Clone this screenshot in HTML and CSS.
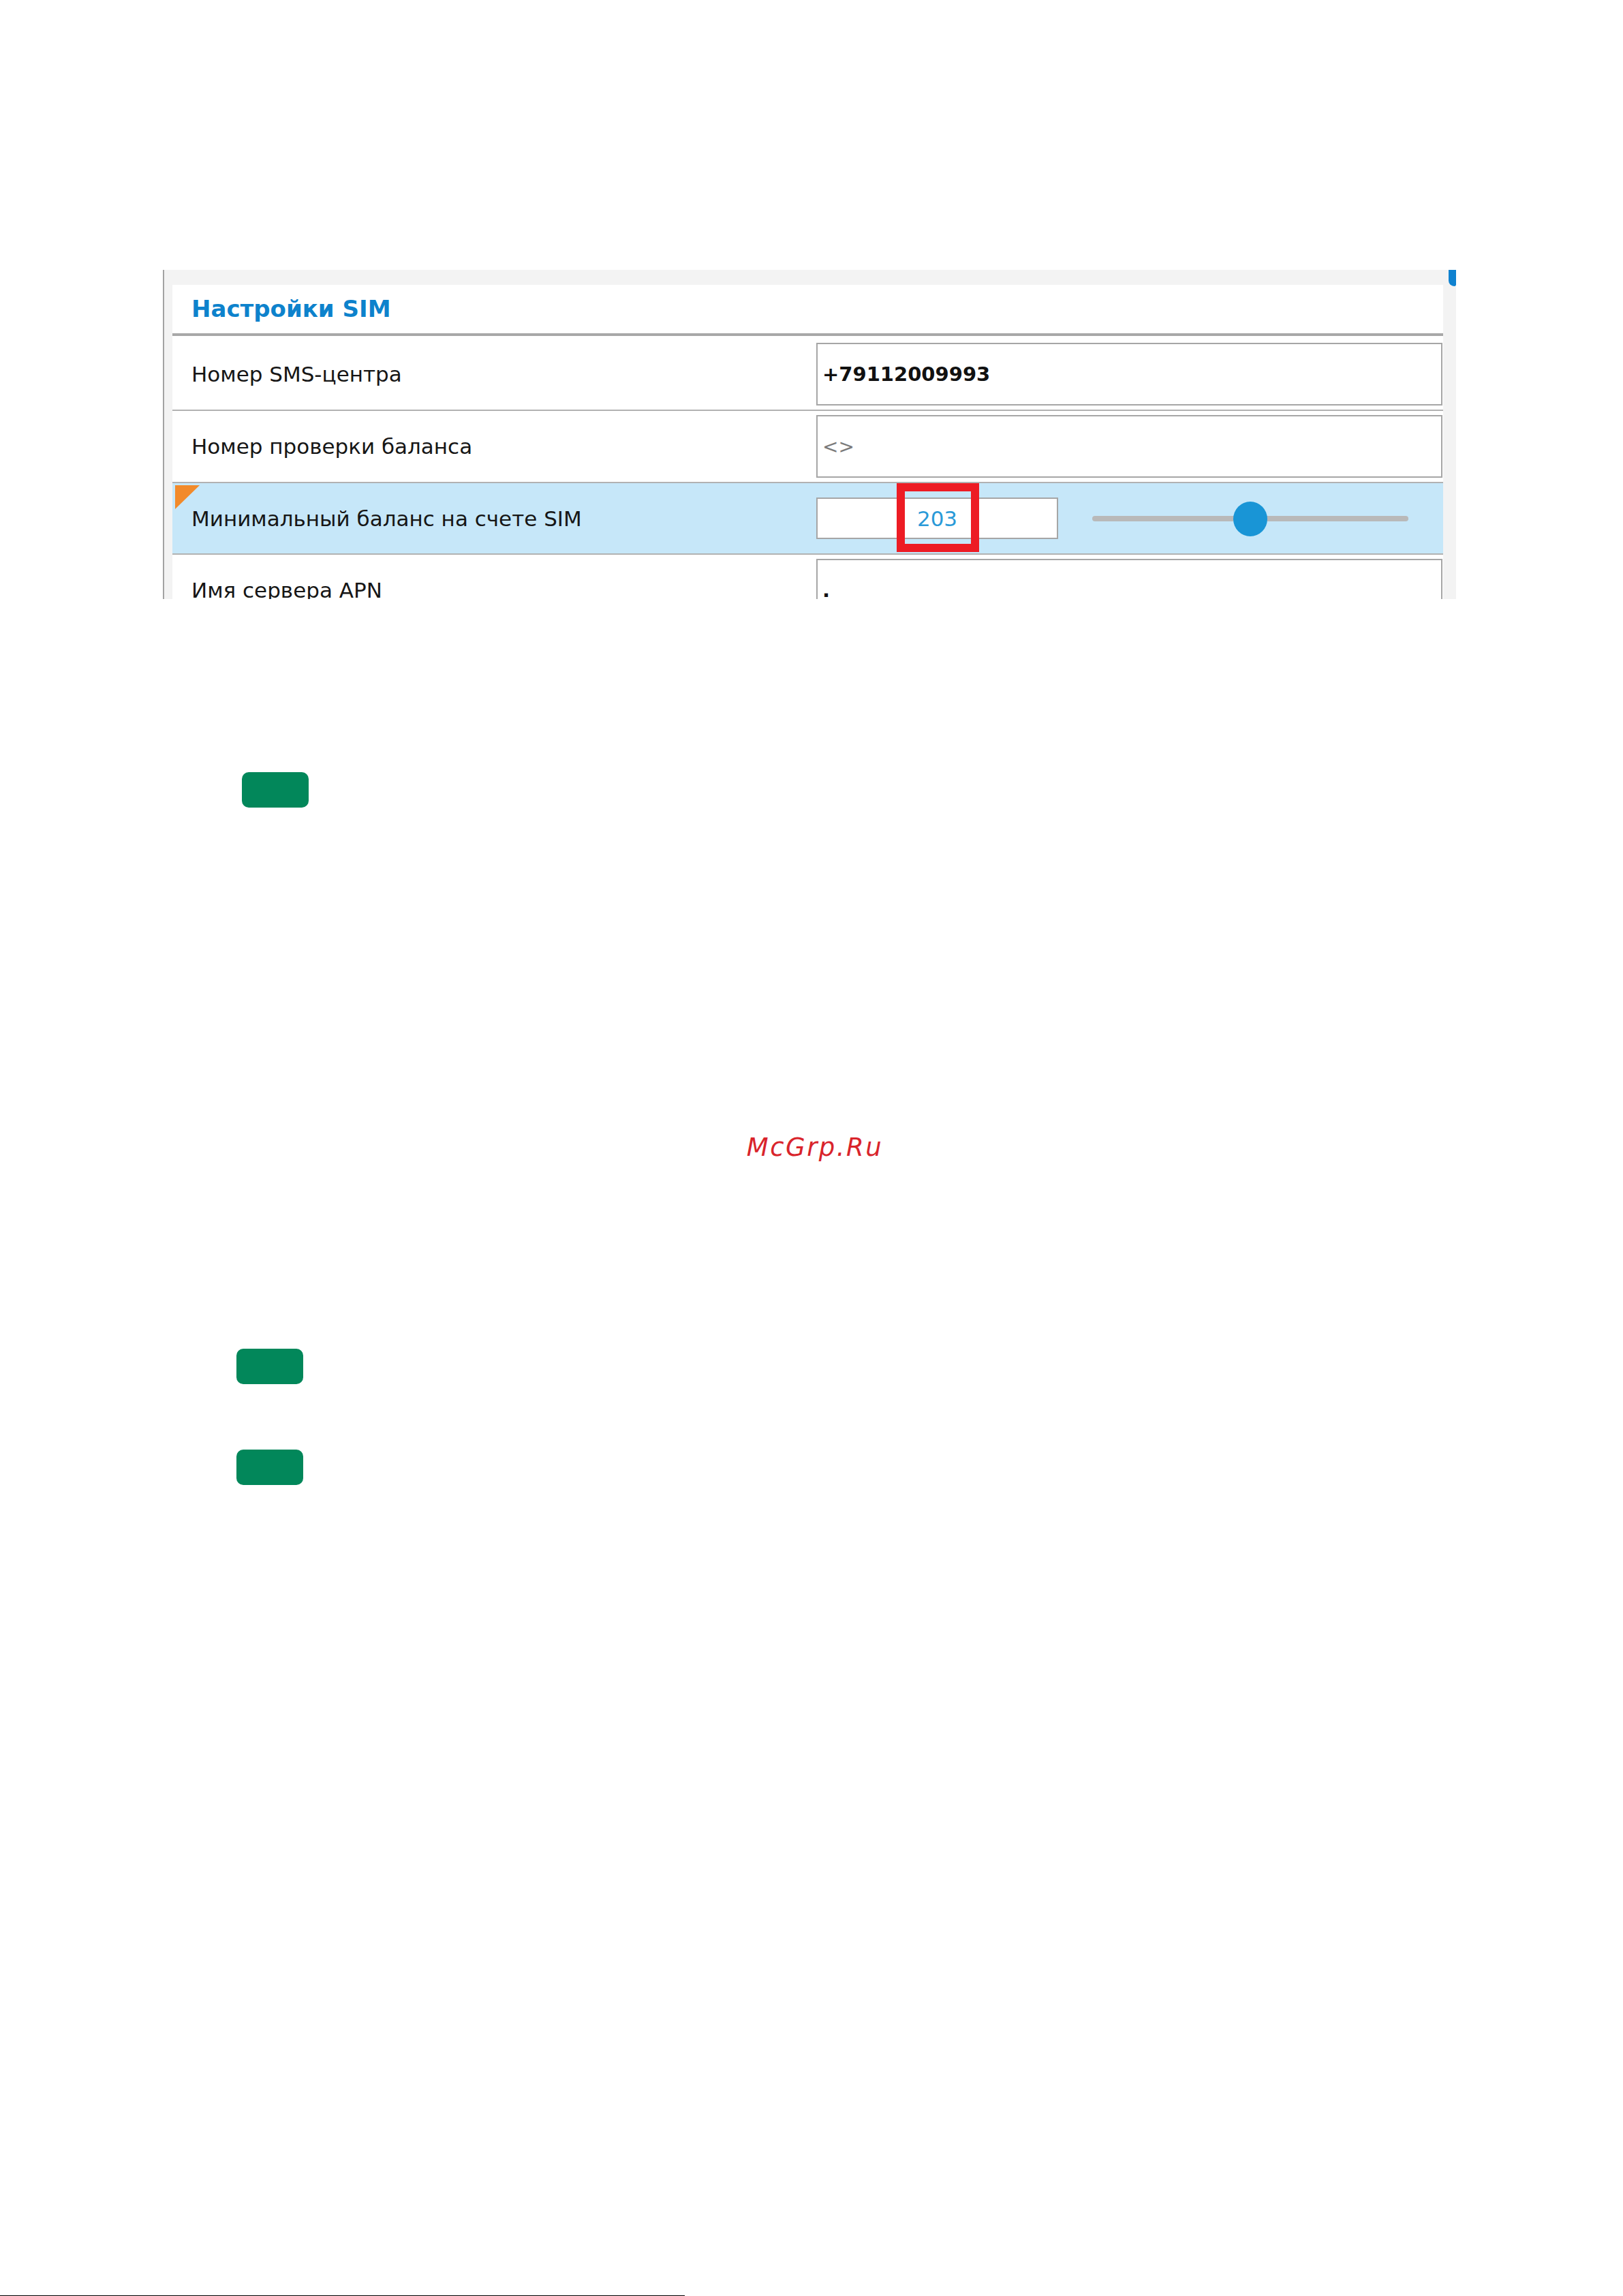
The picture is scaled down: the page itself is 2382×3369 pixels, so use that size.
FILE: index.html
```html
<!DOCTYPE html>
<html lang="ru">
<head>
    <meta charset="UTF-8">
    <title>Настройки SIM</title>
    <link rel="stylesheet" href="styles.css">
</head>
<body>
    <div class="page">
        <div class="shot">
            <span class="scroll-thumb"></span>
            <div class="panel">
                <h2 class="panel-title">Настройки SIM</h2>

                <div class="row first">
                    <div class="label">Номер SMS-центра</div>
                    <div class="control">
                        <div class="field bold">+79112009993</div>
                    </div>
                </div>

                <div class="row">
                    <div class="label">Номер проверки баланса</div>
                    <div class="control">
                        <div class="field muted">&lt;&gt;</div>
                    </div>
                </div>

                <div class="row active">
                    <span class="changed-mark"></span>
                    <div class="label">Минимальный баланс на счете SIM</div>
                    <div class="control">
                        <div class="field small">203</div>
                        <div class="slider">
                            <span class="slider-thumb"></span>
                        </div>
                    </div>
                    <span class="callout"></span>
                </div>

                <div class="row">
                    <div class="label">Имя сервера APN</div>
                    <div class="control">
                        <div class="field bold">.</div>
                    </div>
                </div>
            </div>
        </div>

        <div class="step step-1"></div>

        <div class="watermark">McGrp.Ru</div>

        <div class="step step-2"></div>
        <div class="step step-3"></div>

        <div class="page-rule"></div>
    </div>
</body>
</html>
```

FILE: styles.css
```css
* {
    margin: 0;
    padding: 0;
    box-sizing: border-box;
}

body {
    background: #fff;
    font-family: "DejaVu Sans", "Liberation Sans", sans-serif;
}

.page {
    min-height: 3369px;
    display: flex;
    flex-direction: column;
    align-items: flex-start;
}

/* cropped settings window */
.shot {
    position: relative;
    margin: 396px 0 0 239px;
    width: 1898px;
    height: 483px;
    overflow: hidden;
    background: #f3f3f3;
    border-left: 2px solid #a3a3a3;
    padding: 22px 19px 0 12px;
}

.scroll-thumb {
    position: absolute;
    top: 0;
    right: 0;
    width: 11px;
    height: 24px;
    background: #0f82d0;
    border-radius: 0 0 3px 9px;
}

.panel {
    background: #fff;
    height: 100%;
}

.panel-title {
    height: 75px;
    line-height: 71px;
    padding-left: 28px;
    font-size: 34px;
    font-weight: bold;
    color: #0d82cc;
    border-bottom: 4px solid #a8a8a8;
}

.row {
    position: relative;
    display: grid;
    grid-template-columns: 945px 1fr;
    align-items: center;
    height: 106px;
    border-bottom: 2px solid #b2b2b2;
}

.row.first {
    height: 110px;
    padding-top: 4px;
}

.row.active {
    background: #c6e7f9;
    height: 105px;
}

.label {
    padding-left: 28px;
    font-size: 31px;
    color: #161616;
}

.control {
    display: flex;
    align-items: center;
    padding-right: 1px;
}

.field {
    flex: 1;
    height: 92px;
    display: flex;
    align-items: center;
    padding-left: 7px;
    background: #fff;
    border: 2px solid #a6a6a6;
    font-size: 29px;
    color: #111;
}

.field.bold {
    font-weight: bold;
}

.field.muted {
    font-size: 28px;
    color: #7b7b7b;
}

.field.small {
    flex: 0 0 355px;
    height: 61px;
    justify-content: center;
    padding-left: 0;
    font-size: 31px;
    color: #2a9ad8;
}

.slider {
    position: relative;
    width: 464px;
    height: 8px;
    margin-left: 50px;
    border-radius: 4px;
    background: #b9b9b9;
}

.slider-thumb {
    position: absolute;
    top: 50%;
    left: 50%;
    width: 50px;
    height: 51px;
    margin: -25px 0 0 -25px;
    border-radius: 50%;
    background: #1995d6;
}

.changed-mark {
    position: absolute;
    top: 3px;
    left: 4px;
    width: 36px;
    height: 35px;
    background: #f28a2a;
    clip-path: polygon(0 0, 100% 0, 0 100%);
}

.callout {
    position: absolute;
    top: 0;
    left: 1063px;
    width: 121px;
    height: 101px;
    border: 12px solid #ed1c24;
}

/* green step badges */
.step {
    width: 98px;
    height: 52px;
    border-radius: 10px;
    background: #02875a;
}

.step-1 {
    margin: 254px 0 0 355px;
}

.step-2 {
    margin: 273px 0 0 347px;
}

.step-3 {
    margin: 96px 0 0 347px;
}

.watermark {
    align-self: stretch;
    margin-top: 477px;
    line-height: 44px;
    text-align: center;
    padding-left: 10px;
    font-size: 37px;
    font-style: italic;
    letter-spacing: 2.5px;
    color: #d9242b;
}

.page-rule {
    margin-top: auto;
    width: 1005px;
    height: 1px;
    background: #000;
}
```
